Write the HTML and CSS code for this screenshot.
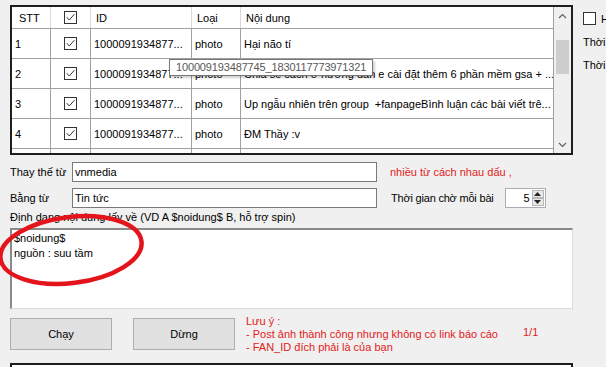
FILE: index.html
```html
<!DOCTYPE html>
<html lang="vi">
<head>
<meta charset="utf-8">
<title>Đăng bài</title>
<link rel="stylesheet" href="styles.css">
</head>
<body>
<div class="app">
  <div class="left">
    <div class="grid">
      <div class="grid-body">
        <div class="row head">
          <div class="cell stt">STT</div>
          <div class="cell chk"><svg width="13" height="13" viewBox="0 0 13 13"><rect x="0.5" y="0.5" width="12" height="12" fill="#fff" stroke="#333"/><path d="M2.8 6.2 L5.3 9 L10.4 3.2" fill="none" stroke="#333" stroke-width="1"/></svg></div>
          <div class="cell">ID</div>
          <div class="cell">Loại</div>
          <div class="cell">Nội dung</div>
        </div>
        <div class="row">
          <div class="cell">1</div>
          <div class="cell chk"><svg width="13" height="13" viewBox="0 0 13 13"><rect x="0.5" y="0.5" width="12" height="12" fill="#fff" stroke="#333"/><path d="M2.8 6.2 L5.3 9 L10.4 3.2" fill="none" stroke="#333" stroke-width="1"/></svg></div>
          <div class="cell">1000091934877...</div>
          <div class="cell">photo</div>
          <div class="cell">Hại não tí</div>
        </div>
        <div class="row">
          <div class="cell">2</div>
          <div class="cell chk"><svg width="13" height="13" viewBox="0 0 13 13"><rect x="0.5" y="0.5" width="12" height="12" fill="#fff" stroke="#333"/><path d="M2.8 6.2 L5.3 9 L10.4 3.2" fill="none" stroke="#333" stroke-width="1"/></svg></div>
          <div class="cell">1000091934877...</div>
          <div class="cell">photo</div>
          <div class="cell">Chia sẻ cách ở hướng dẫn e cài đặt thêm 6 phần mềm gsa + ...</div>
        </div>
        <div class="row">
          <div class="cell">3</div>
          <div class="cell chk"><svg width="13" height="13" viewBox="0 0 13 13"><rect x="0.5" y="0.5" width="12" height="12" fill="#fff" stroke="#333"/><path d="M2.8 6.2 L5.3 9 L10.4 3.2" fill="none" stroke="#333" stroke-width="1"/></svg></div>
          <div class="cell">1000091934877...</div>
          <div class="cell">photo</div>
          <div class="cell">Up ngẫu nhiên trên group&nbsp; +fanpageBình luận các bài viết trê...</div>
        </div>
        <div class="row">
          <div class="cell">4</div>
          <div class="cell chk"><svg width="13" height="13" viewBox="0 0 13 13"><rect x="0.5" y="0.5" width="12" height="12" fill="#fff" stroke="#333"/><path d="M2.8 6.2 L5.3 9 L10.4 3.2" fill="none" stroke="#333" stroke-width="1"/></svg></div>
          <div class="cell">1000091934877...</div>
          <div class="cell">photo</div>
          <div class="cell">ĐM Thầy :v</div>
        </div>
        <div class="row">
          <div class="cell"></div>
          <div class="cell"></div>
          <div class="cell"></div>
          <div class="cell"></div>
          <div class="cell"></div>
        </div>
      </div>
      <div class="vscroll">
        <div class="sb-btn"><svg width="9" height="6" viewBox="0 0 9 6"><path d="M1 5 L4.5 1.5 L8 5" fill="none" stroke="#606060" stroke-width="1.2"/></svg></div>
        <div class="sb-track"><div class="sb-thumb"></div></div>
        <div class="sb-btn"><svg width="9" height="6" viewBox="0 0 9 6"><path d="M1 1 L4.5 4.5 L8 1" fill="none" stroke="#606060" stroke-width="1.2"/></svg></div>
      </div>
      <div class="tooltip">100009193487745_1830117773971321</div>
    </div>

    <div class="frow first">
      <span class="lbl">Thay thế từ</span>
      <div class="input">vnmedia</div>
      <span class="red note">nhiều từ cách nhau dấu ,</span>
    </div>
    <div class="frow second">
      <span class="lbl">Bằng từ</span>
      <div class="input">Tin tức</div>
      <span class="wait">Thời gian chờ mỗi bài</span>
      <div class="numeric">
        <span class="num-val">5</span>
        <div class="spin">
          <div class="spin-btn"><svg width="7" height="4" viewBox="0 0 7 4"><path d="M0 4 L3.5 0 L7 4 Z" fill="#222"/></svg></div>
          <div class="spin-btn"><svg width="7" height="4" viewBox="0 0 7 4"><path d="M0 0 L3.5 4 L7 0 Z" fill="#222"/></svg></div>
        </div>
      </div>
    </div>
    <div class="fmt-label">Định dạng nội dung lấy về (VD A $noidung$ B, hỗ trợ spin)</div>
    <div class="textarea">
      <div>$noidung$</div>
      <div>nguồn : suu tầm</div>
    </div>

    <div class="actions">
      <div class="btn">Chạy</div>
      <div class="btn">Dừng</div>
      <div class="notes red">
        <div>Lưu ý :</div>
        <div>- Post ảnh thành công nhưng không có link báo cáo</div>
        <div>- FAN_ID đích phải là của bạn</div>
      </div>
      <div class="count red">1/1</div>
    </div>

    <div class="log">ok</div>
  </div>

  <div class="right">
    <div class="opt"><svg width="13" height="13" viewBox="0 0 13 13"><rect x="0.5" y="0.5" width="12" height="12" fill="#fff" stroke="#333"/></svg><span>Hẹn giờ</span></div>
    <div class="rline">Thời gian</div>
    <div class="rline">Thời gian</div>
  </div>

  <svg class="circle" width="160" height="90" viewBox="0 0 160 90">
    <ellipse cx="73" cy="44" rx="71" ry="33" transform="rotate(-7 73 44)" fill="none" stroke="#e3141b" stroke-width="4.5"/>
  </svg>
</div>
</body>
</html>
```

FILE: styles.css
```css
* { box-sizing: border-box; }
html, body {
  margin: 0;
  padding: 0;
}
body {
  width: 606px;
  height: 367px;
  overflow: hidden;
  background: #f0f0f0;
  font-family: "Liberation Sans", Arial, sans-serif;
  font-size: 11px;
  color: #000;
}
.app {
  position: relative;
  display: flex;
  gap: 10px;
  padding: 5px 0 0 10px;
}
.left {
  width: 563px;
  flex-shrink: 0;
}
.grid {
  position: relative;
  height: 150px;
  border: 2px solid #1e1e1e;
  background: #fff;
  display: flex;
}
.grid-body {
  flex: 1;
  overflow: hidden;
}
.row {
  display: grid;
  grid-template-columns: 39px 40px 101px 49px 1fr;
  height: 30px;
  border-bottom: 1px solid #a0a0a0;
}
.row.head {
  height: 22px;
}
.cell {
  display: flex;
  align-items: center;
  padding-left: 3px;
  border-right: 1px solid #a0a0a0;
  white-space: nowrap;
  overflow: hidden;
}
.head .cell {
  padding-left: 5px;
  border-right-color: #d9d9d9;
}
.head .cell:last-child { border-right-color: #a0a0a0; }
.head .stt { padding-left: 7px; }
.cell.chk {
  justify-content: center;
  padding-left: 0;
}
.vscroll {
  width: 17px;
  display: flex;
  flex-direction: column;
  background: #f0f0f0;
}
.sb-btn {
  height: 17px;
  display: flex;
  align-items: center;
  justify-content: center;
}
.sb-track {
  flex: 1;
  padding: 16px 2px 0;
}
.sb-thumb {
  height: 34px;
  background: #cdcdcd;
}
.tooltip {
  position: absolute;
  left: 157px;
  top: 52px;
  width: 204px;
  height: 17px;
  padding-left: 6px;
  line-height: 15px;
  background: #fff;
  border: 1px solid #767676;
  color: #575757;
  box-shadow: 2px 2px 2px rgba(0, 0, 0, 0.18);
  white-space: nowrap;
  letter-spacing: -0.15px;
}
.frow {
  display: flex;
  align-items: center;
  height: 20px;
}
.frow.first { margin-top: 7px; }
.frow.second { margin-top: 6px; }
.lbl {
  width: 62px;
}
.input {
  width: 305px;
  height: 20px;
  background: #fff;
  border: 1px solid #7a7a7a;
  padding-left: 2px;
  line-height: 18px;
}
.red { color: #e31b1b; }
.note { margin-left: 13px; }
.wait { margin-left: 14px; letter-spacing: -0.2px; }
.numeric {
  margin-left: 11px;
  width: 41px;
  height: 20px;
  background: #fff;
  border: 1px solid #abadb3;
  display: flex;
  justify-content: flex-end;
  align-items: stretch;
}
.num-val {
  line-height: 18px;
  padding-right: 2px;
}
.spin {
  width: 13px;
  display: flex;
  flex-direction: column;
  padding: 1px 1px 1px 0;
}
.spin-btn {
  flex: 1;
  background: #e8e8e8;
  border: 1px solid #b7b7b7;
  display: flex;
  align-items: center;
  justify-content: center;
}
.fmt-label {
  margin-top: 3px;
  line-height: 13px;
  white-space: nowrap;
}
.textarea {
  margin-top: 4px;
  height: 81px;
  background: #fff;
  border-top: 2px solid #8a8a8a;
  border-left: 2px solid #8a8a8a;
  border-right: 1px solid #dadada;
  border-bottom: 1px solid #dadada;
  padding: 1px 2px;
  line-height: 15px;
}
.actions {
  margin-top: 9px;
  display: flex;
  align-items: flex-start;
}
.btn {
  width: 102px;
  height: 32px;
  background: #e1e1e1;
  border: 1px solid #adadad;
  display: flex;
  align-items: center;
  justify-content: center;
}
.btn + .btn { margin-left: 21px; }
.notes {
  margin-left: 11px;
  margin-top: -3px;
  width: 277px;
  line-height: 13px;
  white-space: nowrap;
}
.count {
  margin-top: 8px;
  line-height: 13px;
}
.log {
  margin-top: 9px;
  height: 40px;
  background: #fff;
  border: 2px solid #1e1e1e;
  padding: 2px 4px;
  color: #333;
}
.right {
  padding-top: 7px;
  white-space: nowrap;
}
.opt {
  display: flex;
  align-items: center;
  gap: 5px;
  height: 13px;
}
.rline {
  margin-top: 11px;
  line-height: 13px;
}
.rline + .rline { margin-top: 10px; }
.circle {
  position: absolute;
  left: -2px;
  top: 206px;
  pointer-events: none;
}
```
